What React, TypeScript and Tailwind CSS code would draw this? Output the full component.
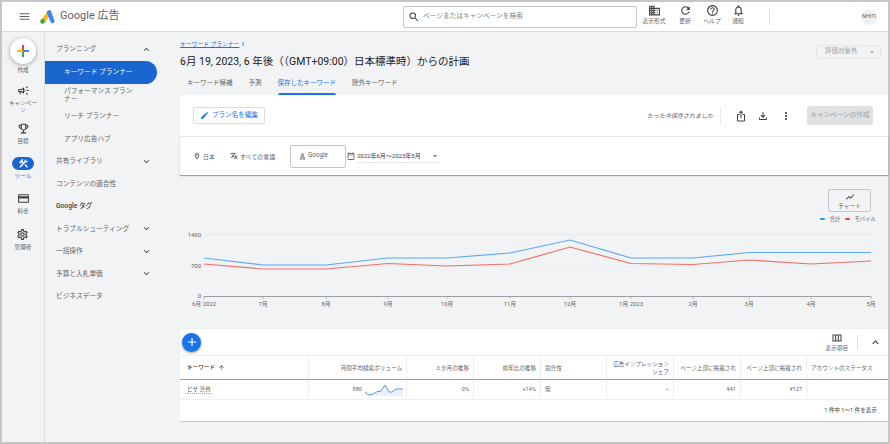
import {
  MdMenu,
  MdSearch,
  MdRefresh,
  MdHelpOutline,
  MdNotificationsNone,
  MdOutlineCampaign,
  MdOutlineEmojiEvents,
  MdConstruction,
  MdOutlineCreditCard,
  MdOutlineSettings,
  MdExpandLess,
  MdExpandMore,
  MdEdit,
  MdIosShare,
  MdOutlineFileDownload,
  MdMoreVert,
  MdOutlineLocationOn,
  MdTranslate,
  MdOutlineCalendarToday,
  MdArrowDropDown,
  MdChevronRight,
  MdShowChart,
  MdAdd,
  MdOutlineViewColumn,
  MdArrowUpward,
  MdOutlineDomain,
  MdOutlineLan,
} from "react-icons/md";

const GRAY = "text-[#5f6368]";

const xs = [204, 263, 326, 388, 447, 510, 570, 631, 693, 749, 811, 871];
const blue = [257, 264, 264, 257, 257, 252, 239, 257, 257, 251.5, 251.5, 251.5];
const red = [263, 268, 268, 262.5, 265, 263, 246, 262.5, 263.5, 259, 263, 260];
const months = ["6月 2022", "7月", "8月", "9月", "10月", "11月", "12月", "1月 2023", "2月", "3月", "4月", "5月"];

const line = (ys: number[]) => xs.map((x, i) => `${x},${ys[i]}`).join(" ");

const NavRow = ({ label, open, bold }: { label: string; open?: boolean; bold?: boolean }) => (
  <div className={`flex h-[22.5px] items-center justify-between whitespace-nowrap pl-[11px] pr-[28px] text-[6.7px] ${bold ? "font-medium text-[#3c4043]" : GRAY}`}>
    <span>{label}</span>
    {open === true && <MdExpandLess className="text-[11px] text-[#3c4043]" />}
    {open === false && <MdExpandMore className="text-[11px] text-[#3c4043]" />}
  </div>
);

const RailItem = ({ icon, label, className }: { icon: React.ReactNode; label: React.ReactNode; className: string }) => (
  <div className={`flex flex-col items-center text-center text-[5.6px] leading-[7px] ${GRAY} ${className}`}>
    {icon}
    <span className="mt-[3px]">{label}</span>
  </div>
);

const TopAction = ({ icon, label, className }: { icon: React.ReactNode; label: string; className: string }) => (
  <div className={`flex flex-col items-center pb-[4px] text-[5.8px] leading-[8px] ${GRAY} ${className}`}>
    {icon}
    <span>{label}</span>
  </div>
);

const headers: [string, string][] = [
  ["月間平均検索ボリューム", "justify-end text-right"],
  ["3 か月の推移", "justify-end text-right"],
  ["前年比の推移", "justify-end text-right"],
  ["競合性", "justify-start"],
  ["広告インプレッション シェア", "justify-end text-right"],
  ["ページ上部に掲載され", "justify-end text-right"],
  ["ページ上部に掲載され", "justify-end text-right"],
  ["アカウントのステータス", "justify-start"],
];

const Sparkline = () => (
  <svg width="38" height="14" viewBox="0 0 38 14">
    <path d="M0 9L4 12L8 11L11 9L16 8L20 2L24 9L27 9L31 6L38 6V13H0Z" fill="#e8f0fe" />
    <polyline points="0,9 4,12 8,11 11,9 16,8 20,2 24,9 27,9 31,6 38,6" fill="none" stroke="#5b95f5" strokeWidth="1" />
  </svg>
);

export default function App() {
  return (
    <div className="flex h-[444px] w-[890px] flex-col overflow-hidden bg-[#c6c6c6] p-[2px] font-['Roboto','Noto_Sans_CJK_JP',sans-serif]">
      {/* Top bar */}
      <header className="flex h-[30px] shrink-0 items-center border-b border-[#dadce0] bg-white">
        <MdMenu className="ml-[16px] text-[13px] text-[#5f6368]" />
        <svg className="ml-[9px]" width="15" height="14" viewBox="0 0 15 14">
          <line x1="9.5" y1="2.5" x2="3" y2="11" stroke="#fbbc04" strokeWidth="4.4" strokeLinecap="round" />
          <line x1="9" y1="2.5" x2="12.4" y2="11" stroke="#4285f4" strokeWidth="4.4" strokeLinecap="round" />
          <circle cx="2.6" cy="11.4" r="2.3" fill="#34a853" />
        </svg>
        <span className="ml-[5px] w-[60px] whitespace-nowrap text-[11px] text-[#5f6368]">Google 広告</span>
        <div className="ml-[283px] flex h-[22px] w-[234px] items-center rounded-[2px] border border-[#c4c7c5] pl-[4px] text-[6.7px] text-[#80868b]">
          <MdSearch className="mr-[3px] text-[12px] text-[#3c4043]" />
          ページまたはキャンペーンを検索
        </div>
        <TopAction className="ml-[10px] w-[14px] whitespace-nowrap" icon={<MdOutlineDomain className="text-[13px] text-[#3c4043]" />} label="表示形式" />
        <TopAction className="ml-[17px] w-[14px] whitespace-nowrap" icon={<MdRefresh className="text-[13px] text-[#3c4043]" />} label="更新" />
        <TopAction className="ml-[13px] w-[14px] whitespace-nowrap" icon={<MdHelpOutline className="text-[13px] text-[#3c4043]" />} label="ヘルプ" />
        <TopAction className="ml-[12px] w-[14px] whitespace-nowrap" icon={<MdNotificationsNone className="text-[13px] text-[#3c4043]" />} label="通知" />
        <div className="ml-[24px] h-[16px] w-px bg-[#dadce0]" />
        <div className="ml-[91px] flex h-[16px] w-[16px] items-center justify-center rounded-full bg-[#edf1f1] text-[5.5px] text-[#5f6368]">
          NHITI
        </div>
      </header>

      <div className="flex min-h-0 flex-1">
        {/* Icon rail */}
        <aside className="flex w-[43px] shrink-0 flex-col items-center border-r border-[#dadce0] bg-[#f1f3f4]">
          <div className="mt-[6px] flex h-[26px] w-[26px] items-center justify-center rounded-full bg-white shadow-[0_1px_4px_rgba(60,64,67,0.45)]">
            <svg width="12" height="12" viewBox="0 0 12 12">
              <rect x="5" y="0" width="2" height="6" fill="#ea4335" />
              <rect x="5" y="6" width="2" height="6" fill="#34a853" />
              <rect x="0" y="5" width="6" height="2" fill="#fbbc04" />
              <rect x="6" y="5" width="6" height="2" fill="#4285f4" />
            </svg>
          </div>
          <span className={`mt-[2px] text-[5.6px] leading-[8px] ${GRAY}`}>作成</span>
          <RailItem className="mt-[10px] w-[30px]" icon={<MdOutlineCampaign className="text-[13px] text-[#3c4043]" />} label="キャンペーン" />
          <RailItem className="mt-[8px]" icon={<MdOutlineEmojiEvents className="text-[13px] text-[#3c4043]" />} label="目標" />
          <div className="mt-[12px] flex flex-col items-center text-[5.6px] leading-[8px] text-[#1a73e8]">
            <div className="flex h-[13px] w-[22px] items-center justify-center rounded-full bg-[#1a66d0]">
              <MdConstruction className="text-[11px] text-white" />
            </div>
            <span className="mt-[2px]">ツール</span>
          </div>
          <RailItem className="mt-[12px]" icon={<MdOutlineCreditCard className="text-[13px] text-[#3c4043]" />} label="料金" />
          <RailItem className="mt-[13px]" icon={<MdOutlineSettings className="text-[13px] text-[#3c4043]" />} label="管理者" />
        </aside>

        {/* Section nav */}
        <nav className="w-[135px] shrink-0 bg-[#f1f3f4] pt-[6px]">
          <NavRow label="プランニング" open={true} />
          <div className="flex h-[23px] w-[112px] items-center rounded-r-full bg-[#1a66d0] pl-[19px] text-[6.7px] text-white">
            キーワード プランナー
          </div>
          <div className={`flex h-[22px] w-[91px] items-center pl-[19px] text-[6.7px] leading-[8px] ${GRAY}`}>
            パフォーマンス プランナー
          </div>
          <div className={`flex h-[22px] items-center pl-[19px] text-[6.7px] ${GRAY}`}>リーチ プランナー</div>
          <div className={`flex h-[22.5px] items-center pl-[19px] text-[6.7px] ${GRAY}`}>アプリ広告ハブ</div>
          <NavRow label="共有ライブラリ" open={false} />
          <NavRow label="コンテンツの適合性" />
          <NavRow label="Google タグ" bold />
          <NavRow label="トラブルシューティング" open={false} />
          <NavRow label="一括操作" open={false} />
          <NavRow label="予算と入札単価" open={false} />
          <NavRow label="ビジネスデータ" />
        </nav>

        {/* Main content */}
        <main className="flex min-w-0 flex-1 flex-col bg-[#f1f3f4]">
          <div className="relative h-[63px] shrink-0">
            <div className="flex items-center pt-[8px] text-[5.8px] leading-[8px] text-[#1a73e8]">
              <span className="underline">キーワード プランナー</span>
              <MdChevronRight className="text-[8px]" />
            </div>
            <h1 className="mt-[6px] text-[10.5px] leading-[16px] text-[#202124]">
              6月 19, 2023, 6 年後（（GMT+09:00）日本標準時）からの計画
            </h1>
            <div className="absolute right-[7px] top-[13px] flex h-[14px] w-[65px] items-center justify-between rounded-[2px] border border-[#e3e5e7] pl-[8px] pr-[3px] text-[6.5px] text-[#9aa0a6]">
              評価対象外
              <MdArrowDropDown className="text-[10px]" />
            </div>
            <div className={`absolute bottom-0 left-0 flex h-[22px] items-center gap-[16px] pl-[7px] text-[6.5px] ${GRAY}`}>
              <span>キーワード候補</span>
              <span>予測</span>
              <span className="relative flex h-full items-center text-[#1a73e8]">
                保存したキーワード
                <span className="absolute bottom-0 left-0 h-[2px] w-full rounded-t bg-[#1a73e8]" />
              </span>
              <span>除外キーワード</span>
            </div>
          </div>

          <section className="flex h-[41px] shrink-0 items-center bg-white pl-[13px] pr-[15px]">
            <button className="flex h-[17px] w-[72px] items-center justify-center gap-[3px] rounded-[2px] border border-[#dadce0] text-[6.6px] text-[#1a73e8]">
              <MdEdit className="text-[9px]" />
              プラン名を編集
            </button>
            <span className={`ml-auto text-[6px] italic ${GRAY}`}>たった今保存されました</span>
            <div className="ml-[7px] h-[18px] w-px bg-[#e8eaed]" />
            <MdIosShare className="ml-[14px] text-[12px] text-[#3c4043]" />
            <MdOutlineFileDownload className="ml-[10px] text-[12px] text-[#3c4043]" />
            <MdMoreVert className="ml-[11px] text-[12px] text-[#3c4043]" />
            <button className="ml-[15px] h-[19px] w-[66px] whitespace-nowrap rounded-[2px] bg-[#dfe1e3] text-[6.6px] text-[#9aa0a6]">
              キャンペーンの作成
            </button>
          </section>

          <section className={`flex h-[39px] shrink-0 items-center border-t border-[#e3e5e7] bg-white pl-[13px] text-[6px] shadow-[0_1px_1px_rgba(60,64,67,0.45)] ${GRAY}`}>
            <MdOutlineLocationOn className="text-[8px] text-[#3c4043]" />
            <span className="ml-[2px] w-[12px]">日本</span>
            <MdTranslate className="ml-[15px] text-[8px] text-[#3c4043]" />
            <span className="ml-[2px] w-[36px]">すべての言語</span>
            <div className="ml-[14px] flex h-[23px] w-[56px] items-center rounded-[2px] border border-[#c4c7c5] pl-[8px] text-[6.3px]">
              <MdOutlineLan className="mr-[2px] text-[7px]" />
              Google
            </div>
            <MdOutlineCalendarToday className="ml-[1px] text-[8px] text-[#3c4043]" />
            <div className="ml-[2px] flex h-[14px] w-[83px] items-center justify-between border-b border-[#e3e5e7] text-[6px] text-[#3c4043]">
              2022年6月～2023年5月
              <MdArrowDropDown className="text-[10px] text-[#5f6368]" />
            </div>
          </section>

          {/* Chart */}
          <section className="flex h-[145px] shrink-0 flex-col">
            <div className="flex justify-end pr-[17px] pt-[14px]">
              <div className={`flex h-[23px] w-[43px] flex-col items-center justify-center rounded-[2px] border border-[#c4c7c5] text-[5.7px] leading-[8px] ${GRAY}`}>
                <MdShowChart className="text-[10px] text-[#3c4043]" />
                チャート
              </div>
            </div>
            <div className={`mt-[3px] flex items-center justify-end pr-[12px] text-[5.4px] leading-[8px] ${GRAY}`}>
              <span className="h-[2px] w-[5px] rounded-full bg-[#2196f3]" />
              <span className="ml-[5px]">合計</span>
              <span className="ml-[5px] h-[2px] w-[5px] rounded-full bg-[#ea4335]" />
              <span className="ml-[4px]">モバイル</span>
            </div>
            <svg className="mt-[3px] block" width="706" height="85" viewBox="180 225 706 85">
              <line x1="204" y1="234" x2="871" y2="234" stroke="#e8eaed" />
              <line x1="204" y1="265" x2="871" y2="265" stroke="#e8eaed" />
              <line x1="204" y1="295.5" x2="871" y2="295.5" stroke="#9aa0a6" />
              {xs.map((x) => (
                <line key={x} x1={x} y1="295" x2={x} y2="298" stroke="#9aa0a6" strokeWidth="0.7" />
              ))}
              <polyline points={line(blue)} fill="none" stroke="#5aaaf5" strokeWidth="1.2" />
              <polyline points={line(red)} fill="none" stroke="#f0706a" strokeWidth="1.2" />
              <g fontSize="5.9" fill="#5f6368">
                <text x="201" y="236" textAnchor="end">1400</text>
                <text x="201" y="267" textAnchor="end">700</text>
                <text x="201" y="297" textAnchor="end">0</text>
                {xs.map((x, i) => (
                  <text key={x} x={x} y="305" textAnchor="middle">{months[i]}</text>
                ))}
              </g>
            </svg>
          </section>

          {/* Keyword table */}
          <section className={`mt-[8px] h-[94px] shrink-0 border-b border-[#c9cbcd] bg-white text-[5.6px] ${GRAY}`}>
            <div className="flex h-[27px] items-center border-t border-[#eceef0] pl-[2px] pr-[6px]">
              <div className="flex h-[19px] w-[19px] items-center justify-center rounded-full bg-[#1a73e8] shadow-[0_1px_3px_rgba(60,64,67,0.5)]">
                <MdAdd className="text-[14px] text-white" />
              </div>
              <div className="ml-auto flex flex-col items-center leading-[8px]">
                <MdOutlineViewColumn className="text-[12px] text-[#3c4043]" />
                表示項目
              </div>
              <div className="ml-[9px] h-[15px] w-px bg-[#dadce0]" />
              <MdExpandLess className="ml-[11px] text-[13px] text-[#3c4043]" />
            </div>
            <div className="grid h-[25px] grid-cols-[129px_98px_67px_67px_66px_67px_67px_66px_79px] border-y border-[#eceef0] border-b-[#9aa0a6]">
              <div className="flex items-center border-r border-[#eceef0] pl-[7px] font-medium text-[#3c4043]">
                キーワード
                <MdArrowUpward className="ml-[3px] text-[7px]" />
              </div>
              {headers.map(([label, align], i) => (
                <div key={i} className={`flex items-center overflow-hidden border-r border-[#eceef0] px-[4px] leading-[8px] last:border-r-0 ${align}`}>
                  <span>{label}</span>
                </div>
              ))}
            </div>
            <div className="grid h-[20px] grid-cols-[129px_98px_67px_67px_66px_67px_67px_66px_79px] border-b border-[#eceef0]">
              <div className="flex items-center border-r border-[#eceef0] pl-[7px]">
                <span className="border-b border-dotted border-[#9aa0a6] leading-[7px]">ピザ 渋谷</span>
              </div>
              <div className="flex items-center justify-end gap-[3px] border-r border-[#eceef0] pr-[3px]">
                880
                <Sparkline />
              </div>
              <div className="flex items-center justify-end border-r border-[#eceef0] pr-[4px]">0%</div>
              <div className="flex items-center justify-end border-r border-[#eceef0] pr-[4px]">+14%</div>
              <div className="flex items-center border-r border-[#eceef0] pl-[4px]">低</div>
              <div className="flex items-center justify-end border-r border-[#eceef0] pr-[4px]">–</div>
              <div className="flex items-center justify-end border-r border-[#eceef0] pr-[4px]">¥41</div>
              <div className="flex items-center justify-end border-r border-[#eceef0] pr-[4px]">¥127</div>
              <div />
            </div>
            <div className="flex h-[21px] items-center justify-end pr-[11px] text-[#3c4043]">1 件中 1～1 件を表示</div>
          </section>
        </main>
      </div>
    </div>
  );
}
